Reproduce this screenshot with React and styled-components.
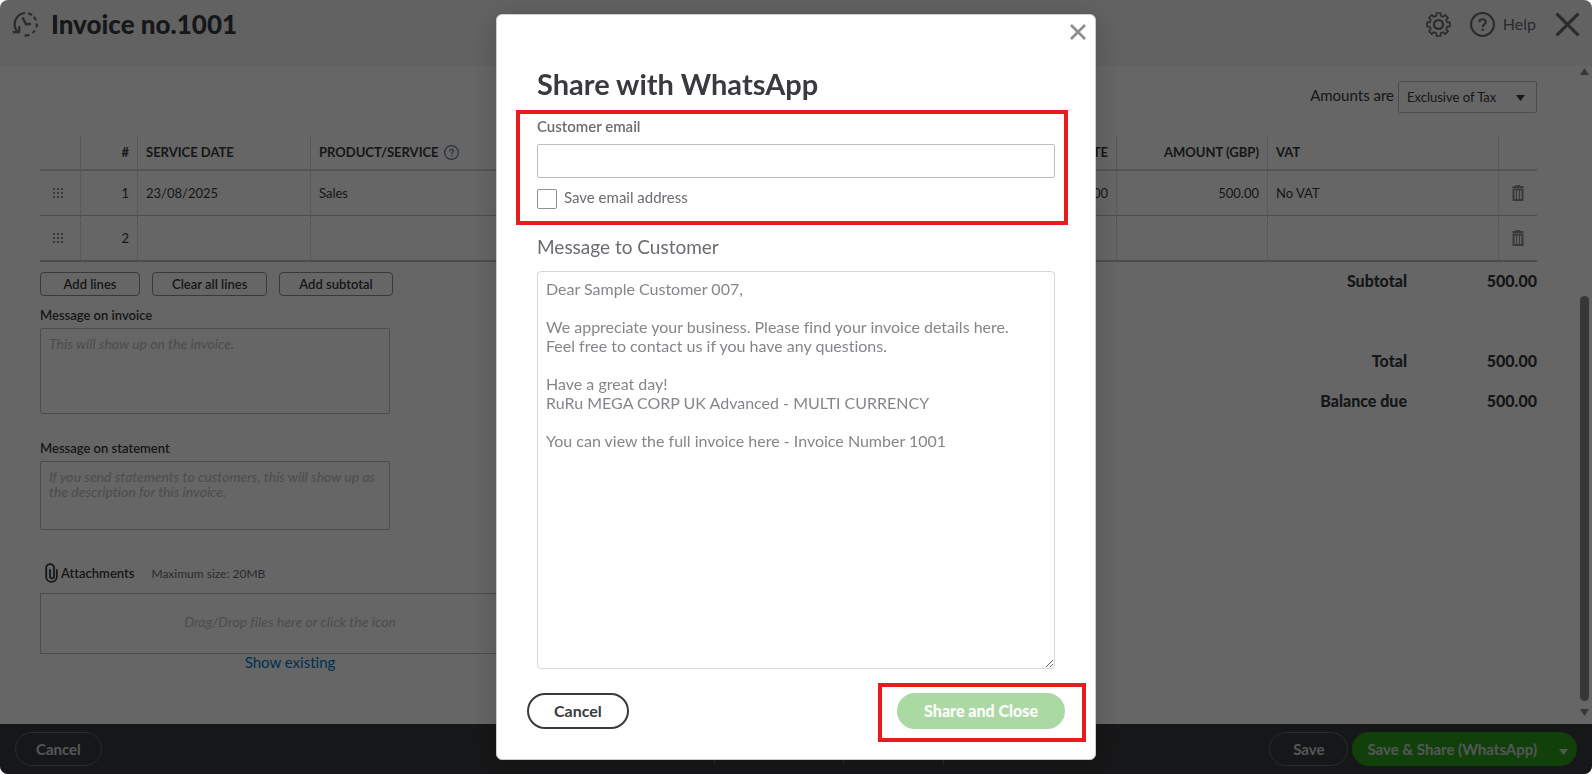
import React, { useState } from "react";
import styled, { createGlobalStyle } from "styled-components";

const GlobalStyle = createGlobalStyle`
  * {
    box-sizing: border-box;
  }

  body {
    margin: 0;
    background: #fff;
    color: #393a3d;
    font-family: Lato, "Open Sans", sans-serif;
    font-size: 13px;
    font-variant-ligatures: none;
  }

  button,
  input,
  select,
  textarea {
    font-family: inherit;
    font-variant-ligatures: inherit;
    color: inherit;
    margin: 0;
  }

  button {
    cursor: pointer;
  }
`;

// page
const Page = styled.div`
  display: flex;
  flex-direction: column;
  height: 100vh;
  border-radius: 8px;
  overflow: hidden;
`;

const Header = styled.header`
  display: flex;
  justify-content: space-between;
  align-items: flex-start;
  height: 66px;
  padding: 8px 12px;
  background: #f4f5f8;
`;

const HeaderGroup = styled.div`
  display: flex;
  align-items: center;
  height: 32px;
  gap: ${(props) => props.$gap}px;
`;

const PageTitle = styled.h1`
  margin: 0;
  font-size: 26px;
  font-weight: 900;
  line-height: 32px;
`;

const IconButton = styled.button`
  display: flex;
  align-items: center;
  justify-content: center;
  gap: 8px;
  padding: 0;
  border: none;
  background: none;
  color: ${(props) => props.$color || "#6b6c72"};
  font-size: 16px;
  line-height: 20px;
`;

const Body = styled.div`
  display: flex;
  flex: 1;
  min-height: 0;
  background: #fff;
`;

const Content = styled.main`
  flex: 1;
  min-width: 0;
  padding: 15px 40px 0;
  overflow: hidden;
`;

const ScrollTrack = styled.div`
  display: flex;
  flex-direction: column;
  align-items: center;
  width: 15px;
  padding: 2px 3px 8px;
`;

const ScrollThumb = styled.div`
  width: 9px;
  height: 405px;
  margin: auto 0 8px;
  border-radius: 5px;
  background: #8b8b8b;
`;

const AmountsRow = styled.div`
  display: flex;
  justify-content: flex-end;
  gap: 4px;
  margin-bottom: 22px;

  label {
    font-size: 15px;
    line-height: 28px;
  }
`;

const SelectWrap = styled.div`
  position: relative;

  svg {
    position: absolute;
    top: 14px;
    right: 12px;
    pointer-events: none;
  }
`;

const TaxSelect = styled.select`
  width: 139px;
  height: 32px;
  padding: 0 8px;
  border: 1px solid #babec5;
  border-radius: 2px;
  background: #fff;
  font-size: 13px;
  appearance: none;
`;

// invoice lines
const LinesTable = styled.table`
  width: 100%;
  table-layout: fixed;
  border-collapse: separate;
  border-spacing: 0;
  border-bottom: 2px solid #babec5;
`;

const HeadCell = styled.th`
  height: 36px;
  padding: 0 8px;
  border-left: ${(props) => (props.$first ? "none" : "1px solid #d4d7dc")};
  border-bottom: 2px solid #d0d2d6;
  font-size: 13px;
  font-weight: 700;
  line-height: 16px;
  white-space: nowrap;
  text-align: ${(props) => props.$align || "left"};
`;

const HeadLabel = styled.span`
  display: flex;
  align-items: center;
  gap: 5px;
`;

const Cell = styled.td`
  height: ${(props) => (props.$last ? 44 : 45)}px;
  padding: 0 8px;
  border-left: ${(props) => (props.$first ? "none" : "1px dotted #babec5")};
  border-bottom: ${(props) => (props.$last ? "none" : "1px solid #babec5")};
  text-align: ${(props) => props.$align || "left"};

  ${IconButton} {
    margin: ${(props) => (props.$first ? "0 0 0 5px" : "0 auto")};
  }
`;

const Lower = styled.div`
  display: flex;
  justify-content: space-between;
  padding-top: 10px;
`;

const LeftColumn = styled.div`
  width: 500px;
`;

const LineActions = styled.div`
  display: flex;
  gap: 12px;
  margin-bottom: 9px;
`;

const SmallButton = styled.button`
  min-width: 100px;
  height: 24px;
  padding: 0 19px;
  border: 1px solid #8d9096;
  border-radius: 4px;
  background: #fff;
  font-size: 13px;
  font-weight: 600;
  line-height: 20px;
`;

const Note = styled.div`
  display: flex;
  flex-direction: column;
  margin-bottom: 24px;

  label {
    margin-bottom: 3px;
    font-weight: 600;
    line-height: 20px;
  }

  textarea {
    width: 350px;
    height: ${(props) => props.$height}px;
    padding: 7px 8px;
    border: 1px solid #babec5;
    border-radius: 2px;
    background: #fff;
    font-size: 14px;
    line-height: 15px;
    resize: none;
  }

  textarea::placeholder {
    color: #babec5;
    font-style: italic;
    opacity: 1;
  }
`;

const AttachmentsHead = styled.div`
  display: flex;
  align-items: center;
  height: 20px;
  margin: 33px 0 10px;
  padding-left: 5px;

  strong {
    margin: 0 17px 0 3px;
    font-weight: 600;
  }

  span {
    color: #6b6c72;
    font-size: 12px;
  }
`;

const DropZone = styled.label`
  display: flex;
  align-items: center;
  justify-content: center;
  height: 61px;
  padding-bottom: 4px;
  border: 1px solid #babec5;
  color: #babec5;
  font-size: 14px;
  font-style: italic;

  input {
    display: none;
  }
`;

const ExistingLink = styled.a`
  display: block;
  color: #0077c5;
  font-size: 15px;
  line-height: 16px;
  text-align: center;
  text-decoration: none;
`;

const Totals = styled.dl`
  display: grid;
  grid-template-columns: auto 130px;
  grid-auto-rows: 20px;
  row-gap: 20px;
  align-content: start;
  margin: 0;
  font-size: 16px;
  font-weight: 900;
  line-height: 18px;
  text-align: right;

  dt,
  dd {
    margin: 0;
  }
`;

const TotalsGap = styled.div`
  grid-column: 1 / -1;
`;

// footer
const Footer = styled.footer`
  display: grid;
  grid-template-columns: 1fr auto 1fr;
  align-items: center;
  height: 50px;
  padding: 0 15px;
  background: #393a3d;
`;

const FooterDividers = styled.div`
  display: flex;
  height: 30px;
`;

const FooterCell = styled.div`
  width: ${(props) => props.$width}px;

  & + & {
    border-left: 1px solid #6b6c72;
  }
`;

const FooterActions = styled.div`
  display: flex;
  justify-content: ${(props) => (props.$end ? "flex-end" : "flex-start")};
  gap: 4px;
`;

const FooterButton = styled.button`
  height: 34px;
  padding: 0 ${(props) => props.$pad}px;
  border: 1px solid #6b6c72;
  border-radius: 17px;
  background: transparent;
  color: #d4d7dc;
  font-size: 15px;
  font-weight: 700;
`;

const SplitButton = styled.div`
  display: flex;
  border-radius: 17px;
  background: #2ca01c;

  button {
    height: 34px;
    padding: 0 15px;
    border: none;
    background: none;
    color: #d4d7dc;
    font-size: 15px;
    font-weight: 700;
  }

  button + button {
    padding: 0 9px 0 7px;
  }
`;

// modal
const Overlay = styled.div`
  position: fixed;
  inset: 0;
  display: flex;
  justify-content: center;
  padding: 14px 0;
  border-radius: 8px;
  background: rgba(0, 0, 0, 0.6);
`;

const Modal = styled.section`
  display: flex;
  flex-direction: column;
  width: 600px;
  border: 1px solid #c9cbcf;
  border-radius: 6px;
  background: #fff;
  box-shadow: 0 4px 30px rgba(0, 0, 0, 0.2);
`;

const ModalTop = styled.div`
  display: flex;
  justify-content: flex-end;
  padding: 9px 9px 0 0;
`;

const ModalTitle = styled.h2`
  margin: 26px 40px 8px;
  font-size: 29px;
  font-weight: 700;
  line-height: 36px;
`;

const Highlight = styled.div`
  border: 4px solid #ea1b1e;
`;

const EmailGroup = styled(Highlight)`
  margin: 0 27px 0 19px;
  padding: 2px 9px 12px 17px;
  color: #6b6c72;
`;

const EmailLabel = styled.label`
  display: block;
  margin-bottom: 8px;
  font-size: 15px;
  font-weight: 600;
  line-height: 20px;
`;

const EmailInput = styled.input`
  display: block;
  width: 100%;
  height: 34px;
  padding: 0 8px;
  border: 1px solid #babec5;
  border-radius: 2px;
  background: #fff;
  font-size: 15px;
`;

const SaveEmail = styled.div`
  display: flex;
  gap: 7px;
  margin-top: 11px;

  input {
    width: 20px;
    height: 20px;
    border: 1px solid #8d9096;
    border-radius: 2px;
    background: #fff;
    appearance: none;
  }

  label {
    font-size: 15px;
    line-height: 17px;
  }
`;

const MessageLabel = styled.label`
  margin: 10px 40px 12px;
  color: #6b6c72;
  font-size: 19px;
  line-height: 24px;
`;

const MessageText = styled.textarea`
  flex: 1;
  margin: 0 40px;
  padding: 7px 8px;
  border: 1px solid #d4d7dc;
  border-radius: 4px;
  background: #fff;
  color: #85868a;
  font-size: 16px;
  line-height: 19px;
  resize: both;
`;

const ModalFooter = styled.div`
  display: flex;
  justify-content: space-between;
  align-items: flex-start;
  padding: 14px 9px 17px 30px;
`;

const PillButton = styled.button`
  height: 36px;
  padding: 0 25px 2px;
  border: 2px solid ${(props) => (props.$primary ? "#aad9a4" : "#393a3d")};
  border-radius: 18px;
  background: ${(props) => (props.$primary ? "#aad9a4" : "#fff")};
  color: ${(props) => (props.$primary ? "#fff" : "#393a3d")};
  font-size: 16px;
  font-weight: ${(props) => (props.$primary ? 900 : 700)};
`;

const CancelWrap = styled.div`
  padding-top: 10px;
`;

const ShareHighlight = styled(Highlight)`
  padding: 6px 17px 9px 15px;
`;

const HistoryIcon = () => (
  <svg width="27" height="27" viewBox="0 0 27 27" fill="none" stroke="currentColor" strokeWidth="2.2">
    <path d="M13 2A11.300 11.300 0 0 0 6.300 21.500" />
    <path d="M0.800 21.200H7.200V15" />
    <path d="M16 2.200A11.300 11.300 0 0 1 20 4M21.800 5.800A11.300 11.300 0 0 1 24 9.500M24.800 12.500A11.300 11.300 0 0 1 24.300 16.500M22.800 19.500A11.300 11.300 0 0 1 20.500 22M17.500 23.800A11.300 11.300 0 0 1 12.500 24.600" />
    <path d="M10.500 6.500L14 13.300L19 13" strokeWidth="2.400" />
  </svg>
);

// outline of a cog with eight flat teeth
const gearPath = () => {
  const points = [];
  for (let i = 0; i < 8; i++) {
    const a = (i * Math.PI) / 4;
    [
      [-0.24, 8.6],
      [-0.18, 11.2],
      [0.18, 11.2],
      [0.24, 8.6],
    ].forEach(([d, r]) => {
      points.push(`${(12 + r * Math.sin(a + d)).toFixed(2)} ${(12 - r * Math.cos(a + d)).toFixed(2)}`);
    });
  }
  return `M${points.join("L")}Z`;
};

const GearIcon = () => (
  <svg width="25" height="25" viewBox="0 0 24 24" fill="none" stroke="currentColor" strokeWidth="1.600" strokeLinejoin="round">
    <path d={gearPath()} />
    <circle cx="12" cy="12" r="4.300" strokeWidth="2.200" />
  </svg>
);

const HelpIcon = ({ size, color = "currentColor", width = 2 }) => (
  <svg width={size} height={size} viewBox="0 0 24 24" fill="none" stroke={color} strokeWidth={width}>
    <circle cx="12" cy="12" r="11" />
    <path d="M9 9.800C9 6 15.200 6 15.200 9.600C15.200 12 12.100 11.800 12.100 14.400" />
    <path d="M12.100 15.800V18" />
  </svg>
);

const CloseIcon = ({ size, width }) => (
  <svg width={size} height={size} viewBox="0 0 24 24" fill="none" stroke="currentColor" strokeWidth={width}>
    <path d="M1.500 1.500L22.500 22.500M22.500 1.500L1.500 22.500" />
  </svg>
);

const Caret = ({ width = 9, height = 6, color = "currentColor", up }) => (
  <svg width={width} height={height} viewBox="0 0 9 6" preserveAspectRatio="none" fill={color}>
    <path d={up ? "M4.500 0L9 6H0Z" : "M0 0H9L4.500 6Z"} />
  </svg>
);

const GripIcon = () => (
  <svg width="10" height="10" viewBox="0 0 10 10" fill="#8d9096">
    {[0, 4, 8].map((y) => [0, 4, 8].map((x) => <rect key={`${x}-${y}`} x={x} y={y} width="2" height="2" />))}
  </svg>
);

const TrashIcon = () => (
  <svg width="12" height="16" viewBox="0 0 12 16" fill="none" stroke="#8d9096">
    <path d="M0.500 2H11.500" strokeWidth="2" />
    <path d="M4 0.500H8" />
    <path d="M1.500 4.500H10.500V15H1.500Z" strokeWidth="2" />
    <path d="M4.500 5V15M7.500 5V15" strokeWidth="1.200" />
  </svg>
);

const ClipIcon = () => (
  <svg width="13" height="20" viewBox="0 0 13 20" fill="none" stroke="#393a3d" strokeWidth="1.800" strokeLinecap="round">
    <path d="M9 4.500V13.500C9 16 5 16 5 13.500V7M9 5V4.500C9 0 1.200 0 1.200 4.500V14C1.200 20.500 11.800 20.500 11.800 14V7" />
  </svg>
);

const lines = [
  { id: 1, date: "23/08/2025", product: "Sales", rate: "500.00", amount: "500.00", vat: "No VAT" },
  { id: 2, date: "", product: "", rate: "", amount: "", vat: "" },
];

const defaultMessage = `Dear Sample Customer 007,

We appreciate your business. Please find your invoice details here.
Feel free to contact us if you have any questions.

Have a great day!
RuRu MEGA CORP UK Advanced - MULTI CURRENCY

You can view the full invoice here - Invoice Number 1001`;

function InvoiceLines() {
  return (
    <LinesTable>
      <colgroup>
        <col style={{ width: 40 }} />
        <col style={{ width: 57 }} />
        <col style={{ width: 173 }} />
        <col />
        <col style={{ width: 150 }} />
        <col style={{ width: 151 }} />
        <col style={{ width: 231 }} />
        <col style={{ width: 39 }} />
      </colgroup>
      <thead>
        <tr>
          <HeadCell $first />
          <HeadCell $align="right">#</HeadCell>
          <HeadCell>SERVICE DATE</HeadCell>
          <HeadCell>
            <HeadLabel>
              PRODUCT/SERVICE
              <HelpIcon size={15} color="#6b7c93" />
            </HeadLabel>
          </HeadCell>
          <HeadCell $align="right">RATE</HeadCell>
          <HeadCell $align="right">AMOUNT (GBP)</HeadCell>
          <HeadCell>VAT</HeadCell>
          <HeadCell />
        </tr>
      </thead>
      <tbody>
        {lines.map((line, index) => {
          const last = index === lines.length - 1;
          return (
            <tr key={line.id}>
              <Cell $first $last={last}>
                <IconButton aria-label="Move line">
                  <GripIcon />
                </IconButton>
              </Cell>
              <Cell $last={last} $align="right">{line.id}</Cell>
              <Cell $last={last}>{line.date}</Cell>
              <Cell $last={last}>{line.product}</Cell>
              <Cell $last={last} $align="right">{line.rate}</Cell>
              <Cell $last={last} $align="right">{line.amount}</Cell>
              <Cell $last={last}>{line.vat}</Cell>
              <Cell $last={last}>
                <IconButton aria-label="Delete line">
                  <TrashIcon />
                </IconButton>
              </Cell>
            </tr>
          );
        })}
      </tbody>
    </LinesTable>
  );
}

function ShareModal() {
  const [email, setEmail] = useState("");
  const [saveEmail, setSaveEmail] = useState(false);
  const [message, setMessage] = useState(defaultMessage);

  return (
    <Overlay>
      <Modal role="dialog" aria-labelledby="share-title">
        <ModalTop>
          <IconButton aria-label="Close dialog" $color="#8d8d8d">
            <CloseIcon size={16} width={4} />
          </IconButton>
        </ModalTop>
        <ModalTitle id="share-title">Share with WhatsApp</ModalTitle>
        <EmailGroup>
          <EmailLabel htmlFor="email">Customer email</EmailLabel>
          <EmailInput id="email" type="email" value={email} onChange={(e) => setEmail(e.target.value)} />
          <SaveEmail>
            <input
              id="save-email"
              type="checkbox"
              checked={saveEmail}
              onChange={(e) => setSaveEmail(e.target.checked)}
            />
            <label htmlFor="save-email">Save email address</label>
          </SaveEmail>
        </EmailGroup>
        <MessageLabel htmlFor="message">Message to Customer</MessageLabel>
        <MessageText id="message" value={message} onChange={(e) => setMessage(e.target.value)} />
        <ModalFooter>
          <CancelWrap>
            <PillButton>Cancel</PillButton>
          </CancelWrap>
          <ShareHighlight>
            <PillButton $primary>Share and Close</PillButton>
          </ShareHighlight>
        </ModalFooter>
      </Modal>
    </Overlay>
  );
}

function App() {
  return (
    <>
      <GlobalStyle />
      <Page>
        <Header>
          <HeaderGroup $gap={12}>
            <IconButton aria-label="Recent invoices">
              <HistoryIcon />
            </IconButton>
            <PageTitle>Invoice no.1001</PageTitle>
          </HeaderGroup>
          <HeaderGroup $gap={19}>
            <IconButton aria-label="Settings">
              <GearIcon />
            </IconButton>
            <IconButton>
              <HelpIcon size={25} />
              Help
            </IconButton>
            <IconButton aria-label="Close">
              <CloseIcon size={25} width={3} />
            </IconButton>
          </HeaderGroup>
        </Header>

        <Body>
          <Content>
            <AmountsRow>
              <label htmlFor="tax">Amounts are</label>
              <SelectWrap>
                <TaxSelect id="tax" defaultValue="exclusive">
                  <option value="exclusive">Exclusive of Tax</option>
                </TaxSelect>
                <Caret />
              </SelectWrap>
            </AmountsRow>

            <InvoiceLines />

            <Lower>
              <LeftColumn>
                <LineActions>
                  <SmallButton>Add lines</SmallButton>
                  <SmallButton>Clear all lines</SmallButton>
                  <SmallButton>Add subtotal</SmallButton>
                </LineActions>
                <Note $height={86}>
                  <label htmlFor="invoice-note">Message on invoice</label>
                  <textarea id="invoice-note" placeholder="This will show up on the invoice." />
                </Note>
                <Note $height={69}>
                  <label htmlFor="statement-note">Message on statement</label>
                  <textarea
                    id="statement-note"
                    placeholder="If you send statements to customers, this will show up as the description for this invoice."
                  />
                </Note>
                <AttachmentsHead>
                  <ClipIcon />
                  <strong>Attachments</strong>
                  <span>Maximum size: 20MB</span>
                </AttachmentsHead>
                <DropZone>
                  Drag/Drop files here or click the icon
                  <input type="file" />
                </DropZone>
                <ExistingLink href="#existing">Show existing</ExistingLink>
              </LeftColumn>
              <Totals>
                <dt>Subtotal</dt>
                <dd>500.00</dd>
                <TotalsGap />
                <dt>Total</dt>
                <dd>500.00</dd>
                <dt>Balance due</dt>
                <dd>500.00</dd>
              </Totals>
            </Lower>
          </Content>
          <ScrollTrack>
            <Caret up height={7} color="#8b8b8b" />
            <ScrollThumb />
            <Caret height={7} color="#8b8b8b" />
          </ScrollTrack>
        </Body>

        <Footer>
          <FooterActions>
            <FooterButton $pad={20}>Cancel</FooterButton>
          </FooterActions>
          <FooterDividers>
            <FooterCell $width={125} />
            <FooterCell $width={129} />
            <FooterCell $width={100} />
            <FooterCell $width={60} />
          </FooterDividers>
          <FooterActions $end>
            <FooterButton $pad={23}>Save</FooterButton>
            <SplitButton>
              <button>Save &amp; Share (WhatsApp)</button>
              <button aria-label="More save options">
                <Caret />
              </button>
            </SplitButton>
          </FooterActions>
        </Footer>
      </Page>
      <ShareModal />
    </>
  );
}

export default App;
